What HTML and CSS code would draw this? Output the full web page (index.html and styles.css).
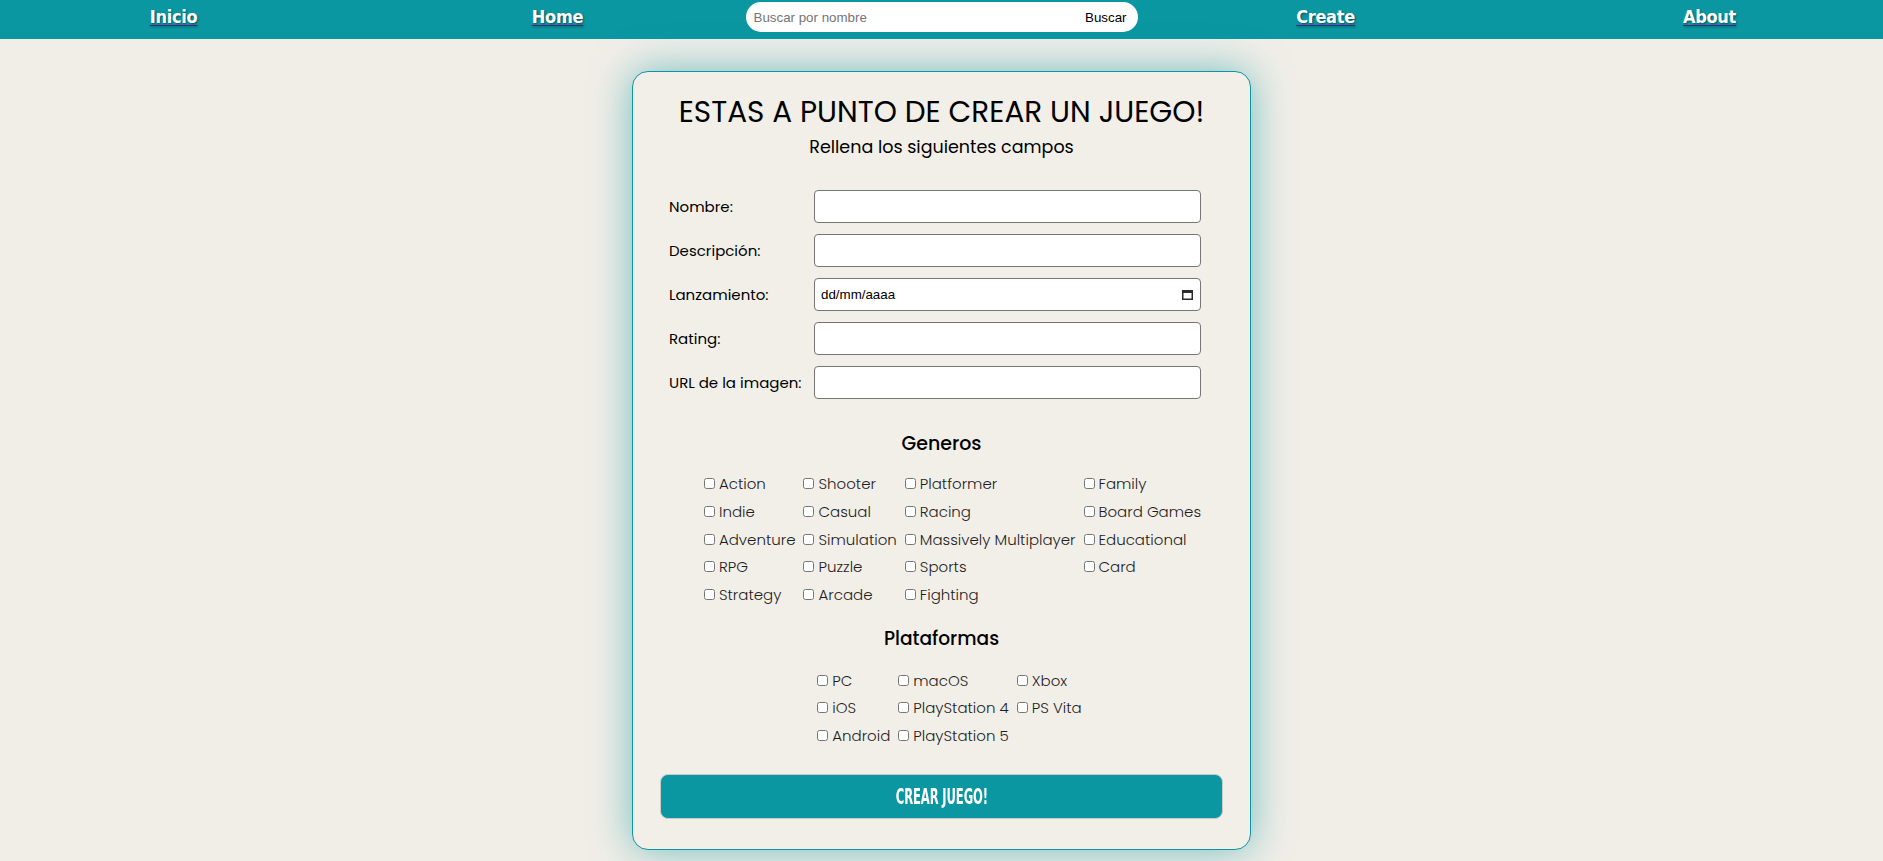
FILE: index.html
```html
<!DOCTYPE html>
<html lang="es">
<head>
<meta charset="utf-8">
<title>Crear juego</title>
<link rel="stylesheet" href="styles.css">
</head>
<body>
<nav class="navbar">
  <a class="nav-link" href="#inicio">Inicio</a>
  <a class="nav-link" href="#home">Home</a>
  <form class="search">
    <input class="search-input" type="text" placeholder="Buscar por nombre">
    <button class="search-btn" type="button">Buscar</button>
  </form>
  <a class="nav-link" href="#create">Create</a>
  <a class="nav-link" href="#about">About</a>
</nav>

<main class="page">
  <form class="card">
    <h1 class="title">ESTAS A PUNTO DE CREAR UN JUEGO!</h1>
    <h3 class="subtitle">Rellena los siguientes campos</h3>

    <div class="fields">
      <label class="field-label">Nombre:</label>
      <input class="field-input" type="text">
      <label class="field-label">Descripción:</label>
      <input class="field-input" type="text">
      <label class="field-label">Lanzamiento:</label>
      <div class="field-input date-input">
        <span class="date-text">dd/mm/aaaa</span>
        <svg class="cal-icon" width="11" height="10" viewBox="0 0 11 10"><rect x="0.75" y="0.75" width="9.5" height="8.5" fill="none" stroke="#2b2b2b" stroke-width="1.5"/><rect x="0" y="0" width="11" height="3" fill="#2b2b2b"/></svg>
      </div>
      <label class="field-label">Rating:</label>
      <input class="field-input" type="text">
      <label class="field-label">URL de la imagen:</label>
      <input class="field-input" type="text">
    </div>

    <h3 class="section-title">Generos</h3>
    <div class="checks genres">
      <label class="check"><input type="checkbox">Action</label>
      <label class="check"><input type="checkbox">Indie</label>
      <label class="check"><input type="checkbox">Adventure</label>
      <label class="check"><input type="checkbox">RPG</label>
      <label class="check"><input type="checkbox">Strategy</label>
      <label class="check"><input type="checkbox">Shooter</label>
      <label class="check"><input type="checkbox">Casual</label>
      <label class="check"><input type="checkbox">Simulation</label>
      <label class="check"><input type="checkbox">Puzzle</label>
      <label class="check"><input type="checkbox">Arcade</label>
      <label class="check"><input type="checkbox">Platformer</label>
      <label class="check"><input type="checkbox">Racing</label>
      <label class="check"><input type="checkbox">Massively Multiplayer</label>
      <label class="check"><input type="checkbox">Sports</label>
      <label class="check"><input type="checkbox">Fighting</label>
      <label class="check"><input type="checkbox">Family</label>
      <label class="check"><input type="checkbox">Board Games</label>
      <label class="check"><input type="checkbox">Educational</label>
      <label class="check"><input type="checkbox">Card</label>
    </div>

    <h3 class="section-title platforms-title">Plataformas</h3>
    <div class="checks platforms">
      <label class="check"><input type="checkbox">PC</label>
      <label class="check"><input type="checkbox">iOS</label>
      <label class="check"><input type="checkbox">Android</label>
      <label class="check"><input type="checkbox">macOS</label>
      <label class="check"><input type="checkbox">PlayStation 4</label>
      <label class="check"><input type="checkbox">PlayStation 5</label>
      <label class="check"><input type="checkbox">Xbox</label>
      <label class="check"><input type="checkbox">PS Vita</label>
    </div>

    <button class="submit" type="button"><span class="submit-text">CREAR JUEGO!</span></button>
  </form>
</main>
</body>
</html>
```

FILE: styles.css
```css
* { box-sizing: border-box; }

html, body {
  margin: 0;
  padding: 0;
}

body {
  background: #f1eee8;
  font-family: "Poppins", "Open Sans", sans-serif;
  color: #000;
  min-height: 861px;
  overflow: hidden;
}

/* ---------- navbar ---------- */
.navbar {
  height: 39px;
  background: #0a97a1;
  display: grid;
  grid-template-columns: repeat(5, 384px);
  justify-content: center;
  justify-items: center;
  align-items: start;
  padding-top: 2px;
}

.nav-link {
  font-family: "DejaVu Sans Condensed", "DejaVu Sans", sans-serif;
  font-weight: bold;
  font-size: 18px;
  line-height: 30px;
  color: #fff;
  text-decoration: underline;
  text-decoration-color: #551a8b;
  text-underline-offset: 2px;
  text-shadow: 1px 1px 2px rgba(0, 0, 0, 0.45);
  letter-spacing: -0.3px;
}

.search {
  width: 392px;
  height: 30px;
  background: #fff;
  border-radius: 15px;
  display: flex;
  align-items: center;
  margin: 0;
}

.search-input {
  flex: 1;
  min-width: 0;
  height: 100%;
  border: none;
  outline: none;
  background: transparent;
  padding: 0 0 0 8px;
  font-family: "Liberation Sans", Arial, sans-serif;
  font-size: 13.33px;
  color: #000;
}

.search-input::placeholder { color: #757575; }

.search-btn {
  border: none;
  background: transparent;
  font-family: "Liberation Sans", Arial, sans-serif;
  font-size: 13.33px;
  color: #000;
  padding: 0 11px 0 6px;
  height: 100%;
}

/* ---------- card ---------- */
.page {
  padding-top: 32px;
}

.card {
  width: 619px;
  margin: 0 auto;
  background: #f2efe9;
  border: 1px solid #0a97a1;
  border-radius: 16px;
  box-shadow: 0 0 40px rgba(10, 150, 160, 0.55);
  padding: 20px 27px 30px;
  display: flex;
  flex-direction: column;
}

.title {
  margin: 0;
  font-size: 29.5px;
  line-height: 40px;
  font-weight: 400;
  text-align: center;
}

.subtitle {
  margin: 3px 0 0;
  font-size: 17.5px;
  line-height: 24px;
  font-weight: 400;
  text-align: center;
}

.fields {
  margin-top: 31px;
  padding-left: 9px;
  display: grid;
  grid-template-columns: 145px 387px;
  row-gap: 11px;
  align-items: center;
}

.field-label {
  font-size: 15px;
  font-weight: 400;
  color: #000;
}

.field-input {
  height: 33px;
  width: 387px;
  background: #fff;
  border: 1px solid #767676;
  border-radius: 4px;
  margin: 0;
  padding: 0 6px;
  font-family: "Liberation Sans", Arial, sans-serif;
  font-size: 13.33px;
}

.date-input {
  display: flex;
  align-items: center;
  justify-content: space-between;
  padding: 0 7px 0 6px;
}

.date-text {
  color: #000;
  font-family: "Liberation Sans", Arial, sans-serif;
  font-size: 13.33px;
}

.cal-icon { display: block; }

.section-title {
  margin: 33px 0 0;
  font-size: 19px;
  line-height: 24px;
  font-weight: 500;
  text-align: center;
}

.platforms-title {
  margin-top: 19px;
  font-size: 18.6px;
}

.checks {
  margin-top: 14px;
  display: grid;
  grid-auto-flow: column;
  column-gap: 4px;
  justify-content: center;
}

.genres {
  grid-template-rows: repeat(5, 27.7px);
  padding-left: 18px;
}

.platforms {
  margin-top: 15px;
  grid-template-rows: repeat(3, 27.5px);
  padding-left: 12px;
}

.check {
  display: flex;
  align-items: center;
  font-size: 15px;
  font-weight: 300;
  color: #1e1e1e;
  white-space: nowrap;
}

.check input {
  width: 11px;
  height: 11px;
  margin: 0 4px 0 4px;
}

.submit {
  margin-top: 25px;
  height: 45px;
  width: 100%;
  background: #0a97a1;
  border: 1px solid #c9c9c9;
  border-radius: 8px;
  color: #fff;
  font-family: "DejaVu Sans Condensed", "DejaVu Sans", sans-serif;
  font-weight: bold;
  font-size: 21.5px;
  cursor: pointer;
}

.submit-text {
  display: inline-block;
  transform: scaleX(0.6);
  letter-spacing: -0.2px;
}
```
